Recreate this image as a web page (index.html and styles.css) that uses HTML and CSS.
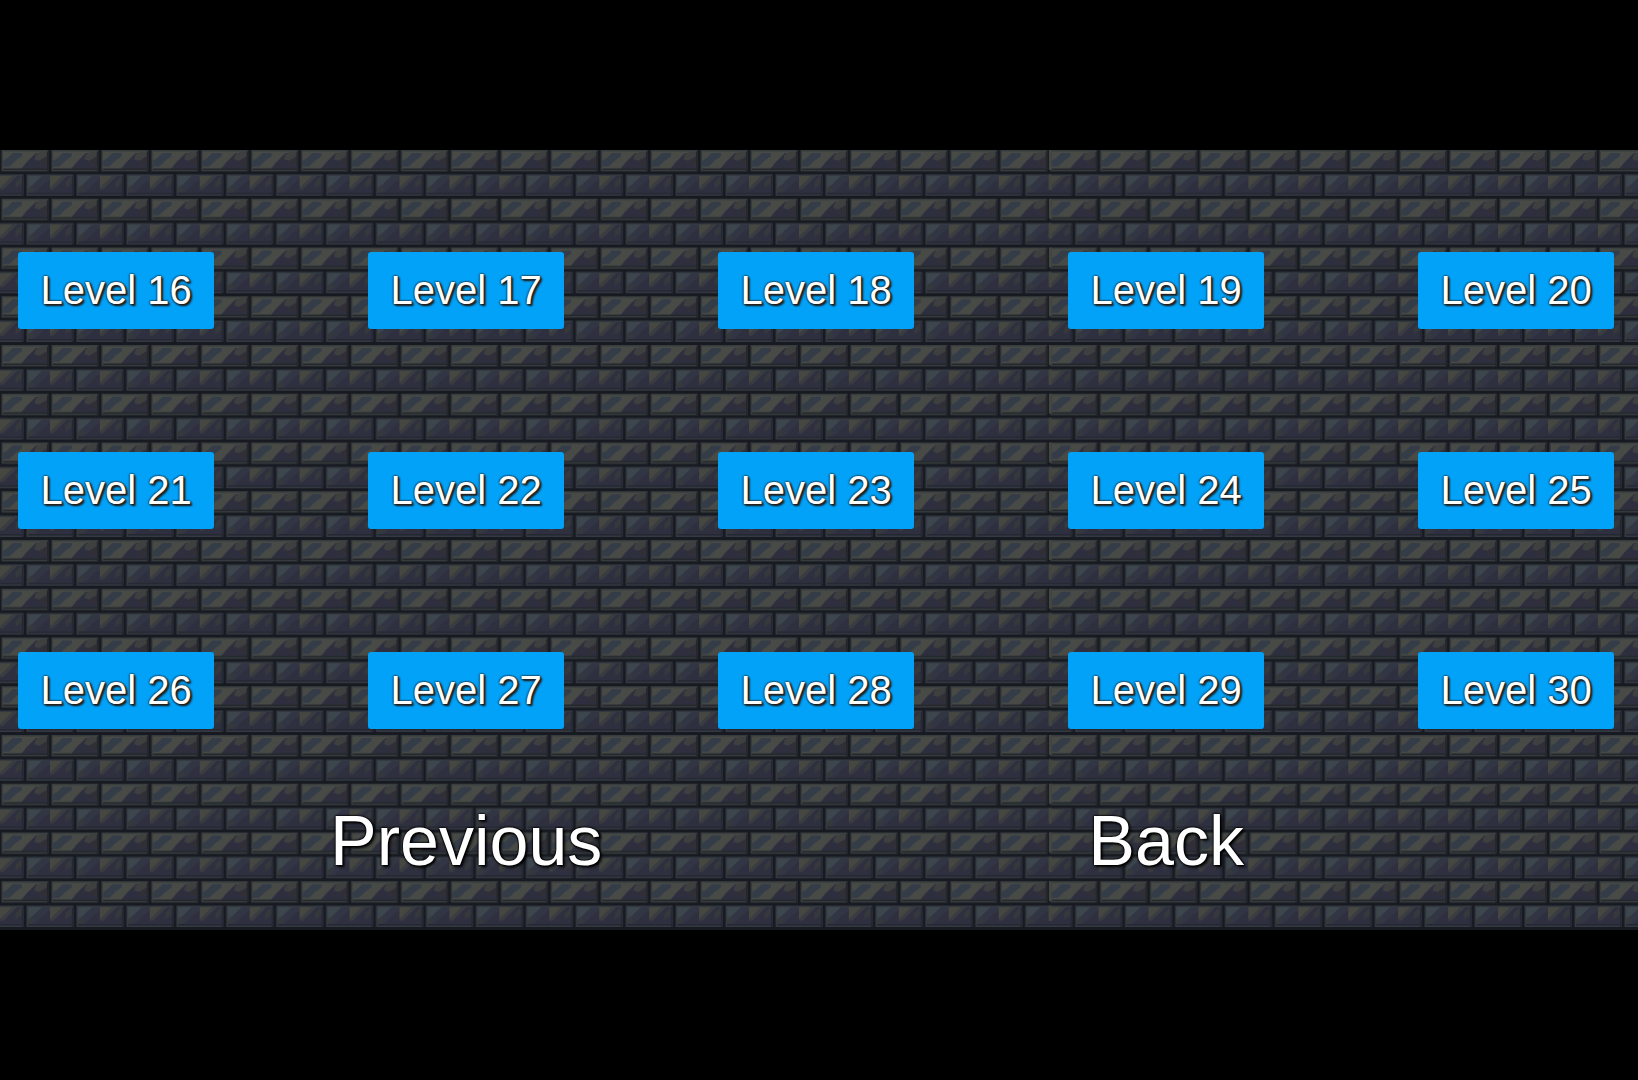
FILE: index.html
```html
<!DOCTYPE html>
<html lang="en">
<head>
    <meta charset="UTF-8">
    <meta name="viewport" content="width=device-width, initial-scale=1.0">
    <title>Level Select</title>
    <link rel="stylesheet" href="styles.css">
</head>
<body>
    <main class="game">
        <svg class="wall" aria-hidden="true">
            <defs>
                <pattern id="bricks" width="32" height="32" patternUnits="userSpaceOnUse" patternTransform="scale(1.5605 1.5234)">
                    <rect width="32" height="32" fill="#181a21"/>
                    <!-- upper row -->
                    <rect x="1" y="0" width="30" height="14" fill="#373d3e"/>
                    <rect x="2" y="1" width="28" height="12" fill="#484a46"/>
                    <path d="M2 10V7L5 5L8 2H14V4L10 7L6 11H2Z" fill="#343c48"/>
                    <path d="M13 13L17 8L23 2H30V13Z" fill="#2e2f3e"/>
                    <path d="M23 3L26 1H30V4L25 7L22 6Z" fill="#3e403f"/>
                    <path d="M26 8L30 4V8L26 11Z" fill="#322f34"/>
                    <path d="M2 12H30V13H2ZM30 1H31V14H30Z" fill="#23272c"/>
                    <!-- lower row -->
                    <path d="M0 16H15V30H0ZM17 16H32V30H17Z" fill="#333a41"/>
                    <path d="M18 17H32V29H18ZM0 17H15V29H0Z" fill="#2e303f"/>
                    <path d="M18 17H27L18 26Z" fill="#3d454d"/>
                    <path d="M27 17H32V19L27 23L22 28H19L18 26Z" fill="#323543"/>
                    <path d="M0 17H8L0 25Z" fill="#454740"/>
                    <path d="M8 17H11L2 26H0V25Z" fill="#393c40"/>
                    <path d="M18 25L20 23L22 26L18 29ZM10 21L14 17V22L10 25Z" fill="#35393b"/>
                    <path d="M0 28H15V29H0ZM18 28H32V29H18ZM14 17H15V30H14Z" fill="#252832"/>
                </pattern>
                <!-- the texture restarts here, without its left mortar line -->
                <pattern id="seam" width="32" height="32" patternUnits="userSpaceOnUse" patternTransform="translate(1048.7) scale(1.5605 1.5234)">
                    <rect width="2" height="13" fill="#444642"/>
                    <rect y="16" width="2" height="10" fill="#43453f"/>
                </pattern>
            </defs>
            <rect width="100%" height="100%" fill="url(#bricks)"/>
        </svg>
        <svg class="seam" aria-hidden="true">
            <rect x="1048.7" width="3" height="100%" fill="url(#seam)"/>
        </svg>
        <div class="levels">
            <button class="level">Level 16</button>
            <button class="level">Level 17</button>
            <button class="level">Level 18</button>
            <button class="level">Level 19</button>
            <button class="level">Level 20</button>
            <button class="level">Level 21</button>
            <button class="level">Level 22</button>
            <button class="level">Level 23</button>
            <button class="level">Level 24</button>
            <button class="level">Level 25</button>
            <button class="level">Level 26</button>
            <button class="level">Level 27</button>
            <button class="level">Level 28</button>
            <button class="level">Level 29</button>
            <button class="level">Level 30</button>
        </div>
        <nav class="menu">
            <button class="link">Previous</button>
            <button class="link">Back</button>
        </nav>
    </main>
</body>
</html>
```
FILE: styles.css
```css
body {
    display: flex;
    align-items: center;
    height: 100vh;
    margin: 0;
    background-color: black;
    font-family: "Liberation Sans", Arial, sans-serif;
    overflow: hidden;
}
.game {
    position: relative;
    width: 1638px;
    height: 780px;
    overflow: hidden;
}
.wall, .seam {
    position: absolute;
    top: 0;
    left: 0;
    width: 100%;
    height: 100%;
}
/* smooths the scaled up texture */
.wall {
    filter: blur(0.6px);
}
.levels {
    position: relative;
    display: grid;
    grid-template-columns: repeat(5, 196.4px);
    grid-auto-rows: 77px;
    column-gap: 153.6px;
    row-gap: 123px;
    padding: 102px 0 0 18px;
}
.level, .link {
    border: none;
    padding: 0;
    font-family: inherit;
    color: white;
}
.level {
    background-color: #02a2f8;
    border-radius: 3px;
    font-size: 40px;
    text-shadow: 0 0 2px #222, 0 0 2px #222, 1px 1px 2px #222, 2px 2px 2px #222;
}
.menu {
    position: relative;
    display: flex;
    gap: 486px;
    padding: 72px 0 0 330px;
}
.link {
    background: none;
    font-size: 70px;
    line-height: 80px;
    text-shadow: 0 0 2px black, 0 0 2px black, 0 0 2px black, 2px 2px 3px black;
}
```
